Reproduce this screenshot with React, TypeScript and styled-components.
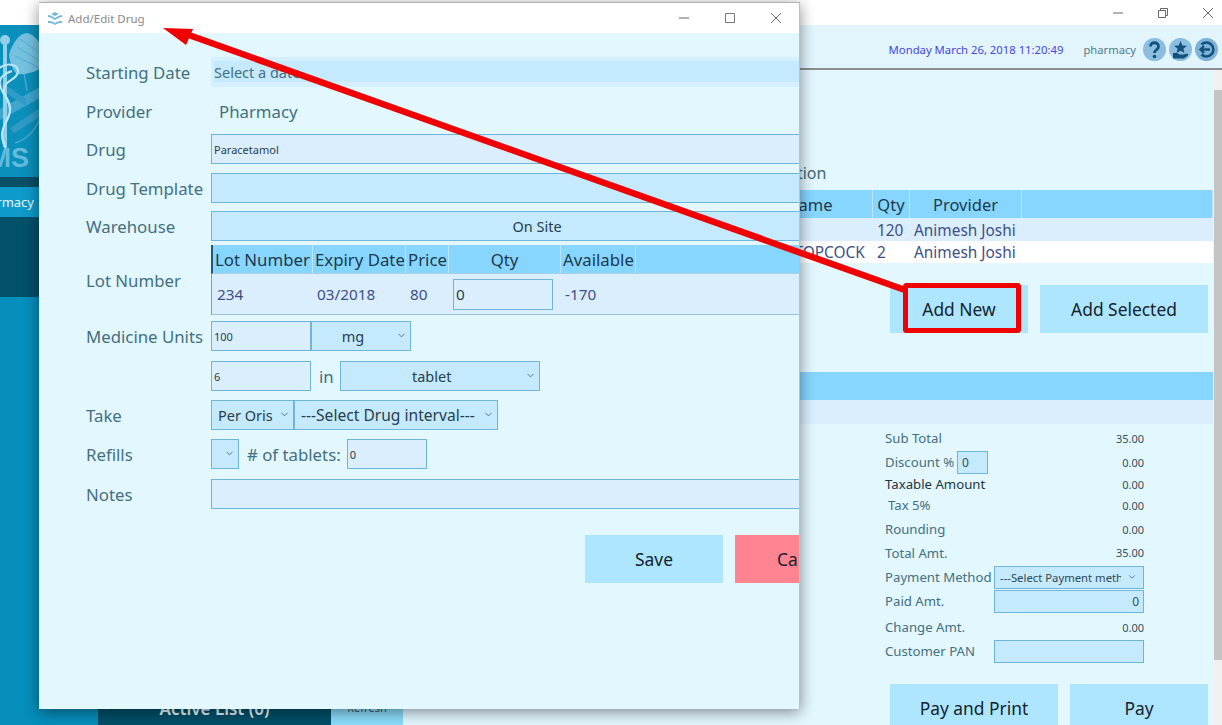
import React from "react";
import styled, { createGlobalStyle } from "styled-components";
import { ChevronDown } from "lucide-react";

const summaryRows = [
  { label: "Sub Total", value: "35.00", h: 24 },
  { label: "Taxable Amount", value: "0.00", h: 20, dark: true },
  { label: "Tax 5%", value: "0.00", h: 22, indent: true },
  { label: "Rounding", value: "0.00", h: 26 },
  { label: "Total Amt.", value: "35.00", h: 21 },
];

const lotColumns = [
  { title: "Lot Number", width: 100, value: "234" },
  { title: "Expiry Date", width: 93, value: "03/2018" },
  { title: "Price", width: 43, value: "80" },
  { title: "Qty", width: 112, center: true },
  { title: "Available", width: 75, value: "-170" },
];

const GlobalStyle = createGlobalStyle`
  html, body {
    margin: 0;
    padding: 0;
    background: #ffffff;
  }
  * {
    box-sizing: border-box;
  }
  body {
    font-family: "Noto Sans", "Open Sans", sans-serif;
  }
`;

const WindowControls = ({ width, maximized }: { width: number; maximized?: boolean }) => (
  <Controls>
    <ControlButton $width={width}>
      <svg width="12" height="12" viewBox="0 0 12 12"><path d="M1 6h10" stroke="#666" fill="none" /></svg>
    </ControlButton>
    <ControlButton $width={width}>
      {maximized ? (
        <svg width="12" height="12" viewBox="0 0 12 12">
          <path d="M1.5 3.5h7v7h-7zM3.5 3.5v-2h7v7h-2" stroke="#666" fill="none" />
        </svg>
      ) : (
        <svg width="12" height="12" viewBox="0 0 12 12"><path d="M1.5 1.5h9v9h-9z" stroke="#777" fill="none" /></svg>
      )}
    </ControlButton>
    <ControlButton $width={width}>
      <svg width="12" height="12" viewBox="0 0 12 12"><path d="M1 1l10 10M11 1L1 11" stroke="#666" fill="none" /></svg>
    </ControlButton>
  </Controls>
);

const Logo = () => (
  <LogoSvg viewBox="0 0 98 152" width="98" height="152">
    {/* crossed bands behind the staff */}
    <path d="M40 62L0 84v11L40 73z" fill="#3ea6cf" />
    <path d="M40 92L14 108l-4-5 30-20z" fill="#2f9cc7" />
    <path d="M0 56l26 18v7L0 64z" fill="#2f9cc7" />
    <path d="M24 48l3 18M15 118c11-3 19-11 25-24" stroke="#49aacf" strokeWidth="1.500" fill="none" />
    {/* wing */}
    <path d="M9 30C12 18 20 8 27 8c5 1 9 5 13 10v26c-8 4-16 6-23 5-4-3-7-11-8-19z" fill="#74c1e0" />
    <path d="M20 14l20 14M17 22l23 14M15 31l25 12" stroke="#4fb0d6" strokeWidth="1" fill="none" />
    {/* staff and snakes */}
    <rect x="3" y="18" width="4" height="104" fill="#8fd0ea" />
    <circle cx="5" cy="15" r="5" fill="#8fd0ea" />
    <path d="M-2 44c8-7 20-5 20 2 0 9-14 9-14 19 0 8 8 11 6 21-1 8-8 14-8 24 0 6 2 10 4 14M12 46c-6 2-14 6-12 14 2 10 10 15 10 25 0 10-8 15-8 25 0 6 3 10 4 14"
      stroke="#bfe6f5" strokeWidth="2" fill="none" />
  </LogoSvg>
);

const Select = ({ text, width, wide, plain }: { text?: string; width: number; wide?: boolean; plain?: boolean }) => (
  <SelectBox $width={width} $wide={wide} $plain={plain}>
    <SelectText>{text}</SelectText>
    <ChevronDown size={11} strokeWidth={2} color="#46708a" />
  </SelectBox>
);

const Annotation = () => (
  <AnnotationLayer viewBox="0 0 1222 725" width="1222" height="725">
    <path d="M905 290 L186 34" stroke="#f00000" strokeWidth="6.500" fill="none" />
    <polygon points="163,28 193,29 186,45" fill="#f00000" />
    <rect x="905.500" y="285.500" width="113" height="45" rx="1" stroke="#f00000" strokeWidth="5" fill="none" />
  </AnnotationLayer>
);

export default function App() {
  return (
    <Screen>
      <GlobalStyle />
      <TitleBar>
        <WindowControls width={45} maximized />
      </TitleBar>
      <Body>
        <Sidebar>
          <LogoArea>
            <Logo />
            <LogoText>HMS</LogoText>
          </LogoArea>
          <SideDivider />
          <SideTab>Pharmacy</SideTab>
          <SideMenu />
        </Sidebar>
        <Main>
          <Header>
            <DateText>Monday March 26, 2018 11:20:49</DateText>
            <UserText>pharmacy</UserText>
            <HeaderIcon>
              <svg width="23" height="23" viewBox="0 0 23 23">
                <path d="M7.500 8.500c0-5 8-5 8 0 0 3.500-4 3-4 6.500" stroke="#14507c" strokeWidth="2.800" fill="none" />
                <circle cx="11.500" cy="18.500" r="1.800" fill="#14507c" />
              </svg>
            </HeaderIcon>
            <HeaderIcon>
              <svg width="23" height="23" viewBox="0 0 23 23">
                <polygon points="11.500,3 13.300,7.500 18,7.800 14.400,10.800 15.500,15 11.500,12.700 7.500,15 8.600,10.800 5,7.800 9.700,7.500" fill="#14507c" />
                <path d="M4 15h4l3 1.500h3l5-1v2l-4 3H4z" fill="#14507c" />
              </svg>
            </HeaderIcon>
            <HeaderIcon $dark>
              <svg width="23" height="23" viewBox="0 0 23 23">
                <path d="M6.500 6.500a7 7 0 1 1 0 10" stroke="#14507c" strokeWidth="2.600" fill="none" />
                <path d="M15 11.500H6M9 8l-3.500 3.500L9 15" stroke="#14507c" strokeWidth="2.400" fill="none" />
              </svg>
            </HeaderIcon>
          </Header>
          <Content>
            <LeftList>
              <ActiveListButton>Active List (0)</ActiveListButton>
              <RefreshButton>Refresh</RefreshButton>
            </LeftList>
            <RightPane>
              <SectionTitle>Prescription</SectionTitle>
              <DrugTable>
                <DrugHead $name>Name</DrugHead>
                <DrugHead>Qty</DrugHead>
                <DrugHead>Provider</DrugHead>
                <DrugHead />
                <DrugCell $shade />
                <DrugCell $shade>120</DrugCell>
                <DrugCell $shade>Animesh Joshi</DrugCell>
                <DrugCell $shade />
                <DrugCell $name>STOPCOCK</DrugCell>
                <DrugCell>2</DrugCell>
                <DrugCell>Animesh Joshi</DrugCell>
                <DrugCell />
              </DrugTable>
              <AddButtons>
                <ActionButton $width={138}>Add New</ActionButton>
                <ActionButton $width={168}>Add Selected</ActionButton>
              </AddButtons>
              <BlueBar />
              <ShadeBar />
              <Summary>
                <SummaryRow $h={24}>
                  <SummaryLabel>{summaryRows[0].label}</SummaryLabel>
                  <SummaryValue>{summaryRows[0].value}</SummaryValue>
                </SummaryRow>
                <SummaryRow $h={24}>
                  <SummaryLabel>Discount %</SummaryLabel>
                  <DiscountInput readOnly value="0" />
                  <SummaryValue>0.00</SummaryValue>
                </SummaryRow>
                {summaryRows.slice(1).map((row) => (
                  <SummaryRow key={row.label} $h={row.h}>
                    <SummaryLabel $dark={row.dark} $indent={row.indent}>{row.label}</SummaryLabel>
                    <SummaryValue>{row.value}</SummaryValue>
                  </SummaryRow>
                ))}
                <SummaryRow $h={24} $push>
                  <SummaryLabel>Payment Method</SummaryLabel>
                  <PaymentSelect>
                    <PaymentText>---Select Payment method</PaymentText>
                    <ChevronDown size={10} strokeWidth={2} color="#46708a" />
                  </PaymentSelect>
                </SummaryRow>
                <SummaryRow $h={24}>
                  <SummaryLabel>Paid Amt.</SummaryLabel>
                  <PaymentInput readOnly value="0" $right />
                </SummaryRow>
                <SummaryRow $h={24} $push>
                  <SummaryLabel>Change Amt.</SummaryLabel>
                  <SummaryValue>0.00</SummaryValue>
                </SummaryRow>
                <SummaryRow $h={24}>
                  <SummaryLabel>Customer PAN</SummaryLabel>
                  <PaymentInput readOnly value="" />
                </SummaryRow>
              </Summary>
              <PayButtons>
                <ActionButton $width={168}>Pay and Print</ActionButton>
                <ActionButton $width={138}>Pay</ActionButton>
              </PayButtons>
            </RightPane>
            <ScrollBar>
              <ScrollThumb />
            </ScrollBar>
          </Content>
        </Main>
      </Body>

      <Dialog>
        <DialogTitle>
          <DialogIcon viewBox="0 0 16 14" width="16" height="14">
            <path d="M8 1l4 2-4 2-4-2zM1 4c2 0 4 1 7 3 3-2 5-3 7-3v2c-2 0-4 1-7 3-3-2-5-3-7-3zM1 10c2 0 4 0 7 2 3-2 5-2 7-2v2c-2 0-4 0-7 2-3-2-5-2-7-2z" fill="#74b9da" />
          </DialogIcon>
          <DialogCaption>Add/Edit Drug</DialogCaption>
          <WindowControls width={46} />
        </DialogTitle>
        <DialogForm>
          <FormRow $h={30} $top={24}>
            <FormLabel>Starting Date</FormLabel>
            <DateField>
              <DateInner>Select a date</DateInner>
            </DateField>
          </FormRow>
          <FormRow $h={30} $top={9}>
            <FormLabel>Provider</FormLabel>
            <ProviderText>Pharmacy</ProviderText>
          </FormRow>
          <FormRow $h={30} $top={8}>
            <FormLabel>Drug</FormLabel>
            <TextField readOnly value="Paracetamol" $width={652} />
          </FormRow>
          <FormRow $h={30} $top={9}>
            <FormLabel>Drug Template</FormLabel>
            <TextField readOnly value="" $width={652} $blue />
          </FormRow>
          <FormRow $h={30} $top={8}>
            <FormLabel>Warehouse</FormLabel>
            <Select text="On Site" width={668} />
          </FormRow>
          <FormRow $h={70} $top={4}>
            <FormLabel>Lot Number</FormLabel>
            <LotTable>
              <LotHead>
                {lotColumns.map((col) => (
                  <LotHeadCell key={col.title} $width={col.width} $center={col.center}>{col.title}</LotHeadCell>
                ))}
              </LotHead>
              <LotRow>
                {lotColumns.map((col) => (
                  <LotCell key={col.title} $width={col.width}>
                    {col.value ?? <QtyInput readOnly value="0" />}
                  </LotCell>
                ))}
              </LotRow>
            </LotTable>
          </FormRow>
          <FormRow $h={30} $top={6}>
            <FormLabel>Medicine Units</FormLabel>
            <TextField readOnly value="100" $width={100} />
            <Select text="mg" width={100} />
          </FormRow>
          <FormRow $h={30} $top={10}>
            <span />
            <TextField readOnly value="6" $width={100} />
            <InlineText $margin="0 6px 0 8px">in</InlineText>
            <Select text="tablet" width={200} />
          </FormRow>
          <FormRow $h={30} $top={9}>
            <FormLabel>Take</FormLabel>
            <Select text="Per Oris" width={83} plain />
            <Select text="---Select Drug interval---" width={204} plain wide />
          </FormRow>
          <FormRow $h={30} $top={9}>
            <FormLabel>Refills</FormLabel>
            <Select width={28} />
            <InlineText $margin="0 6px 0 8px">{"# of tablets:"}</InlineText>
            <TextField readOnly value="0" $width={80} />
          </FormRow>
          <FormRow $h={30} $top={10}>
            <FormLabel>Notes</FormLabel>
            <TextField readOnly value="" $width={652} />
          </FormRow>
          <DialogButtons>
            <ActionButton $width={138}>Save</ActionButton>
            <ActionButton $width={138} $cancel>Cancel</ActionButton>
          </DialogButtons>
        </DialogForm>
      </Dialog>

      <Annotation />
    </Screen>
  );
}

const Screen = styled.div`
  position: relative;
  width: 1222px;
  height: 725px;
  overflow: hidden;
  display: flex;
  flex-direction: column;
  background: #ffffff;
`;

const TitleBar = styled.div`
  height: 25px;
  flex: none;
  display: flex;
  justify-content: flex-end;
  background: #ffffff;
  margin-right: -8px;
`;

const Controls = styled.div`
  display: flex;
  margin-left: auto;
`;

const ControlButton = styled.div<{ $width: number }>`
  width: ${(p) => p.$width}px;
  height: 25px;
  display: flex;
  align-items: center;
  justify-content: center;
`;

const Body = styled.div`
  flex: 1;
  min-height: 0;
  display: flex;
`;

const Sidebar = styled.aside`
  width: 98px;
  flex: none;
  display: flex;
  flex-direction: column;
  background: #068ebc;
`;

const LogoArea = styled.div`
  position: relative;
  height: 152px;
  flex: none;
  background: #0b8fbb;
  overflow: hidden;
`;

const LogoSvg = styled.svg`
  display: block;
`;

const LogoText = styled.div`
  position: absolute;
  right: 69px;
  top: 118px;
  font-family: "Liberation Sans", sans-serif;
  font-size: 27px;
  line-height: 30px;
  font-weight: 700;
  color: #64bbdc;
`;

const SideDivider = styled.div`
  height: 10px;
  flex: none;
  background: #0a4f66;
`;

const SideTab = styled.div`
  height: 30px;
  flex: none;
  display: flex;
  align-items: center;
  justify-content: flex-end;
  padding-right: 64px;
  font-size: 13px;
  white-space: nowrap;
  color: #e6f8ff;
  background: #0e9aca;
`;

const SideMenu = styled.div`
  height: 80px;
  flex: none;
  background: #02506a;
`;

const Main = styled.main`
  flex: 1;
  min-width: 0;
  display: flex;
  flex-direction: column;
  background: #e3f7ff;
`;

const Header = styled.header`
  height: 45px;
  flex: none;
  display: flex;
  align-items: center;
  justify-content: flex-end;
  gap: 3px;
  padding: 6px 4px 0 0;
  background: #e2f5fd;
  border-bottom: 2px solid #878f93;
`;

const DateText = styled.span`
  font-size: 11.300px;
  color: #4646e0;
  margin-right: 17px;
`;

const UserText = styled.span`
  font-size: 11.200px;
  color: #4f7c8c;
  margin-right: 4px;
`;

const HeaderIcon = styled.div<{ $dark?: boolean }>`
  width: 23px;
  height: 23px;
  border-radius: 50%;
  background: ${(p) => (p.$dark ? "#7db3d8" : "#8abde0")};
`;

const Content = styled.div`
  flex: 1;
  min-height: 0;
  display: flex;
`;

const LeftList = styled.div`
  width: 305px;
  flex: none;
  display: flex;
  align-items: flex-end;
`;

const ActiveListButton = styled.div`
  width: 233px;
  height: 36px;
  padding-top: 2px;
  display: flex;
  align-items: center;
  justify-content: center;
  background: #004f68;
  color: #e8f6fb;
  font-size: 17px;
  font-weight: 600;
`;

const RefreshButton = styled.div`
  width: 72px;
  height: 36px;
  display: flex;
  align-items: center;
  justify-content: center;
  background: #8cdcfb;
  color: #33586a;
  font-size: 11px;
`;

const RightPane = styled.div`
  flex: 1;
  min-width: 0;
  display: flex;
  flex-direction: column;
  padding: 0 1px 0 297px;
`;

const SectionTitle = styled.div`
  height: 20px;
  margin-top: 93px;
  padding-left: 36px;
  font-size: 16px;
  line-height: 20px;
  white-space: nowrap;
  color: #40697a;
`;

const DrugTable = styled.div`
  margin-top: 7px;
  display: grid;
  grid-template-columns: 173px 37px 112px 1fr;
  grid-template-rows: 28px 23px 22px;
  flex: none;
`;

const DrugHead = styled.div<{ $name?: boolean }>`
  display: flex;
  align-items: center;
  justify-content: ${(p) => (p.$name ? "flex-start" : "center")};
  padding-left: ${(p) => (p.$name ? "86px" : "0")};
  background: #87d6ff;
  border-right: 1px solid #b9e6fb;
  font-size: 16.500px;
  color: #1d3a4d;
`;

const DrugCell = styled.div<{ $shade?: boolean; $name?: boolean }>`
  display: flex;
  align-items: center;
  padding: 1px 0 0 ${(p) => (p.$name ? "86px" : "4px")};
  background: ${(p) => (p.$shade ? "#daeefe" : "#ffffff")};
  font-size: 15.400px;
  color: #3f4f86;
  white-space: nowrap;
`;

const AddButtons = styled.div`
  margin-top: 22px;
  display: flex;
  justify-content: flex-end;
  gap: 12px;
  padding-right: 5px;
  flex: none;
`;

const ActionButton = styled.div<{ $width: number; $cancel?: boolean }>`
  width: ${(p) => p.$width}px;
  height: 48px;
  flex: none;
  display: flex;
  align-items: center;
  justify-content: center;
  background: ${(p) => (p.$cancel ? "#ff8492" : "#aee6ff")};
  font-size: 17.400px;
  color: #14232e;
`;

const BlueBar = styled.div`
  height: 28px;
  flex: none;
  margin-top: 39px;
  background: #87d6ff;
`;

const ShadeBar = styled.div`
  height: 24px;
  flex: none;
  background: #daeefe;
`;

const Summary = styled.div`
  width: 259px;
  flex: none;
  margin: 2px 0 0 185px;
  display: flex;
  flex-direction: column;
`;

const SummaryRow = styled.div<{ $h: number; $push?: boolean }>`
  height: ${(p) => p.$h}px;
  flex: none;
  margin-top: ${(p) => (p.$push ? "2px" : "0")};
  display: flex;
  align-items: center;
  white-space: nowrap;
`;

const SummaryLabel = styled.span<{ $dark?: boolean; $indent?: boolean }>`
  font-size: 13.200px;
  color: ${(p) => (p.$dark ? "#22363f" : "#44707f")};
  padding-left: ${(p) => (p.$indent ? "3px" : "0")};
`;

const SummaryValue = styled.span`
  margin-left: auto;
  font-size: 11px;
  color: #33505c;
`;

const DiscountInput = styled.input`
  width: 31px;
  height: 23px;
  margin-left: 3px;
  padding: 0 4px;
  border: 1px solid #6db5d9;
  background: #c5e9fd;
  font: inherit;
  font-size: 12px;
  color: #33505c;
  outline: none;
`;

const PaymentSelect = styled.div`
  width: 150px;
  height: 23px;
  margin-left: auto;
  display: flex;
  align-items: center;
  padding: 0 6px 0 5px;
  border: 1px solid #6db5d9;
  background: #c5e9fd;
  font-size: 11.300px;
  color: #2d4a57;
`;

const PaymentText = styled.span`
  width: 122px;
  overflow: hidden;
  margin-right: 6px;
`;

const PaymentInput = styled.input<{ $right?: boolean }>`
  width: 150px;
  height: 23px;
  margin-left: auto;
  padding: 0 4px;
  border: 1px solid #6db5d9;
  background: #c5e9fd;
  font: inherit;
  font-size: 12px;
  color: #33505c;
  text-align: ${(p) => (p.$right ? "right" : "left")};
  outline: none;
`;

const PayButtons = styled.div`
  margin-top: 21px;
  display: flex;
  justify-content: flex-end;
  gap: 12px;
  padding-right: 5px;
  flex: none;
`;

const ScrollBar = styled.div`
  width: 8px;
  flex: none;
  padding-top: 20px;
  background: #f0f0f0;
`;

const ScrollThumb = styled.div`
  height: 570px;
  background: #c4c4c4;
`;

const Dialog = styled.section`
  position: absolute;
  left: 39px;
  top: 2px;
  width: 761px;
  height: 707px;
  display: flex;
  flex-direction: column;
  overflow: hidden;
  background: #e3f7ff;
  border-top: 1px solid #b0b0b0;
  border-right: 1px solid #c0c0c0;
  box-shadow: 0 3px 14px rgba(0, 0, 0, 0.45);
`;

const DialogTitle = styled.div`
  height: 30px;
  flex: none;
  display: flex;
  align-items: center;
  background: #ffffff;
  padding-left: 8px;
`;

const DialogIcon = styled.svg`
  display: block;
  margin-right: 5px;
`;

const DialogCaption = styled.span`
  font-size: 11.500px;
  color: #8a8a8a;
`;

const DialogForm = styled.div`
  flex: 1;
  padding-left: 47px;
`;

const FormRow = styled.div<{ $h: number; $top: number }>`
  height: ${(p) => p.$h}px;
  margin-top: ${(p) => p.$top}px;
  display: flex;
  align-items: center;
  white-space: nowrap;
  & > :first-child {
    width: 125px;
    flex: none;
  }
`;

const FormLabel = styled.span`
  padding-top: 1px;
  font-size: 16.800px;
  color: #44707f;
`;

const DateField = styled.div`
  width: 652px;
  height: 30px;
  flex: none;
  padding: 4px 0 5px 3px;
  background: #d4f0fe;
`;

const DateInner = styled.div`
  height: 21px;
  display: flex;
  align-items: center;
  background: #c5e9fd;
  font-size: 14.500px;
  color: #44707f;
`;

const ProviderText = styled.span`
  padding-left: 8px;
  font-size: 16.800px;
  color: #44707f;
`;

const TextField = styled.input<{ $width: number; $blue?: boolean }>`
  width: ${(p) => p.$width}px;
  height: 30px;
  flex: none;
  padding: 0 2px;
  border: 1px solid #6db5d9;
  background: ${(p) => (p.$blue ? "#c5e9fd" : "#daeefe")};
  font-family: inherit;
  font-size: 11px;
  color: #2d3f48;
  outline: none;
`;

const SelectBox = styled.div<{ $width: number; $wide?: boolean; $plain?: boolean }>`
  position: relative;
  width: ${(p) => p.$width}px;
  height: 30px;
  flex: none;
  display: flex;
  align-items: center;
  justify-content: ${(p) => (p.$plain ? "flex-start" : "center")};
  padding: ${(p) => (p.$plain ? "0 0 0 6px" : "0 16px 0 0")};
  border: 1px solid #6db5d9;
  background: #c5e9fd;
  font-size: ${(p) => (p.$wide ? "15.600px" : "14.500px")};
  color: #25404e;
  & > svg {
    position: absolute;
    right: 3px;
    top: 8px;
  }
`;

const SelectText = styled.span`
  white-space: nowrap;
`;

const LotTable = styled.div`
  width: 652px;
  height: 70px;
  flex: none;
  display: flex;
  flex-direction: column;
`;

const LotHead = styled.div`
  height: 29px;
  flex: none;
  display: flex;
  background: #87d6ff;
  border-left: 2px solid #1f5a7c;
  border-bottom: 1px solid #a9cfe2;
`;

const LotHeadCell = styled.div<{ $width: number; $center?: boolean }>`
  width: ${(p) => p.$width}px;
  flex: none;
  display: flex;
  align-items: center;
  justify-content: ${(p) => (p.$center ? "center" : "flex-start")};
  padding-left: ${(p) => (p.$center ? "0" : "2px")};
  border-right: 1px solid #b9e6fb;
  font-size: 16.800px;
  color: #1d3a4d;
  overflow: hidden;
`;

const LotRow = styled.div`
  flex: 1;
  display: flex;
  padding-left: 1px;
  background: #daeefe;
  border-left: 1px solid #7d9fb2;
  border-bottom: 1px solid #9dbccd;
`;

const LotCell = styled.div<{ $width: number }>`
  width: ${(p) => p.$width}px;
  flex: none;
  display: flex;
  align-items: center;
  padding-left: 4px;
  font-size: 15.300px;
  color: #3f4f86;
`;

const QtyInput = styled.input`
  width: 100px;
  height: 31px;
  padding: 0 2px;
  border: 1px solid #6db5d9;
  background: #daeefe;
  font: inherit;
  color: #2d3f48;
  outline: none;
`;

const InlineText = styled.span<{ $margin: string }>`
  margin: ${(p) => p.$margin};
  font-size: 16.800px;
  color: #44707f;
`;

const DialogButtons = styled.div`
  margin: 26px 0 0 499px;
  display: flex;
  gap: 12px;
`;

const AnnotationLayer = styled.svg`
  position: absolute;
  left: 0;
  top: 0;
  pointer-events: none;
`;
